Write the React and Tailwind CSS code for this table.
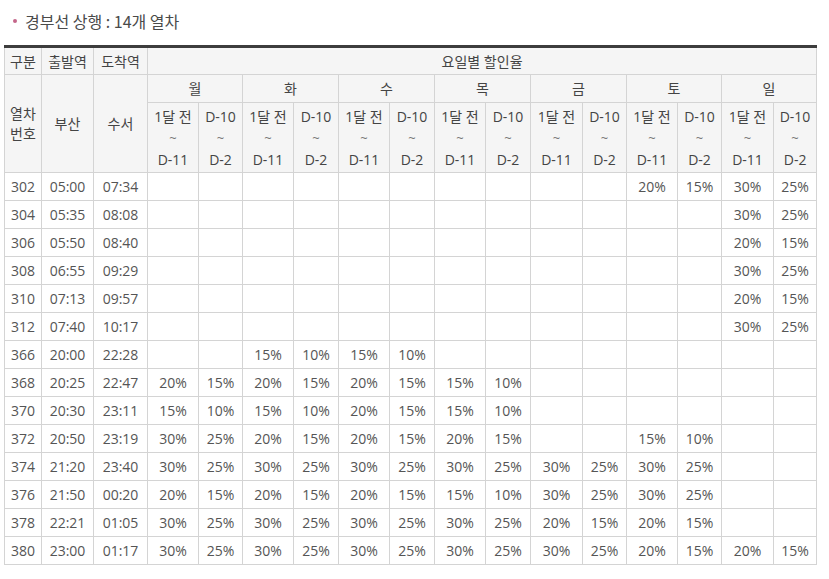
const days = ["월", "화", "수", "목", "금", "토", "일"];

// [열차번호, 부산, 수서, 14 discount cells]
const rows = [
  ["302", "05:00", "07:34", ["", "", "", "", "", "", "", "", "", "", "20%", "15%", "30%", "25%"]],
  ["304", "05:35", "08:08", ["", "", "", "", "", "", "", "", "", "", "", "", "30%", "25%"]],
  ["306", "05:50", "08:40", ["", "", "", "", "", "", "", "", "", "", "", "", "20%", "15%"]],
  ["308", "06:55", "09:29", ["", "", "", "", "", "", "", "", "", "", "", "", "30%", "25%"]],
  ["310", "07:13", "09:57", ["", "", "", "", "", "", "", "", "", "", "", "", "20%", "15%"]],
  ["312", "07:40", "10:17", ["", "", "", "", "", "", "", "", "", "", "", "", "30%", "25%"]],
  ["366", "20:00", "22:28", ["", "", "15%", "10%", "15%", "10%", "", "", "", "", "", "", "", ""]],
  ["368", "20:25", "22:47", ["20%", "15%", "20%", "15%", "20%", "15%", "15%", "10%", "", "", "", "", "", ""]],
  ["370", "20:30", "23:11", ["15%", "10%", "15%", "10%", "20%", "15%", "15%", "10%", "", "", "", "", "", ""]],
  ["372", "20:50", "23:19", ["30%", "25%", "20%", "15%", "20%", "15%", "20%", "15%", "", "", "15%", "10%", "", ""]],
  ["374", "21:20", "23:40", ["30%", "25%", "30%", "25%", "30%", "25%", "30%", "25%", "30%", "25%", "30%", "25%", "", ""]],
  ["376", "21:50", "00:20", ["20%", "15%", "20%", "15%", "20%", "15%", "15%", "10%", "30%", "25%", "30%", "25%", "", ""]],
  ["378", "22:21", "01:05", ["30%", "25%", "30%", "25%", "30%", "25%", "30%", "25%", "20%", "15%", "20%", "15%", "", ""]],
  ["380", "23:00", "01:17", ["30%", "25%", "30%", "25%", "30%", "25%", "30%", "25%", "30%", "25%", "20%", "15%", "20%", "15%"]],
];

const colWidths = [37, 52, 54, 51, 44, 51, 45, 51, 45, 51, 45, 52, 44, 51, 44, 52, 43];

export default function App() {
  const th = "border border-[#d4d4d4] bg-[#f5f5f5] font-normal text-[#444] text-center align-middle p-0";
  const td = "border border-[#d4d4d4] text-center align-middle p-0 h-[28px] text-[#555]";

  return (
    <div className="bg-white w-[829px] h-[579px] font-['Open_Sans','Noto_Sans_CJK_KR',sans-serif] text-[14px]">
      <div className="flex items-center h-[40px] pl-[13px] pt-[1px]">
        <span className="w-[4px] h-[4px] rounded-full bg-[#c4668a] mr-[8px] mt-[1px]"></span>
        <span className="text-[16px] text-[#4a4a4a] font-['Noto_Sans_CJK_KR',sans-serif]">경부선 상행 : 14개 열차</span>
      </div>
      <div className="pl-[4px] pt-[5px]">
        <table className="table-fixed border-collapse w-[811px] border-t-[3px] border-t-[#3d3d3d]">
          <colgroup>
            {colWidths.map((w, i) => (
              <col key={i} style={{ width: w }} />
            ))}
          </colgroup>
          <thead>
            <tr className="h-[28px]">
              <th className={th + " border-t-0"}>구분</th>
              <th className={th + " border-t-0"}>출발역</th>
              <th className={th + " border-t-0"}>도착역</th>
              <th className={th + " border-t-0"} colSpan={14}>요일별 할인율</th>
            </tr>
            <tr className="h-[28px]">
              <th className={th + " leading-[20px]"} rowSpan={2}>
                열차
                <br />
                번호
              </th>
              <th className={th} rowSpan={2}>부산</th>
              <th className={th} rowSpan={2}>수서</th>
              {days.map((d) => (
                <th key={d} className={th} colSpan={2}>{d}</th>
              ))}
            </tr>
            <tr className="h-[70px]">
              {days.map((d) => [
                <th key={d + "a"} className={th + " leading-[21px]"}>
                  1달 전
                  <br />
                  <span className="text-[13px] text-[#777]">~</span>
                  <br />
                  D-11
                </th>,
                <th key={d + "b"} className={th + " leading-[21px]"}>
                  D-10
                  <br />
                  <span className="text-[13px] text-[#777]">~</span>
                  <br />
                  D-2
                </th>,
              ])}
            </tr>
          </thead>
          <tbody>
            {rows.map(([no, dep, arr, cells]) => (
              <tr key={no}>
                <td className={td}>{no}</td>
                <td className={td}>{dep}</td>
                <td className={td}>{arr}</td>
                {cells.map((c, i) => (
                  <td key={i} className={td}>{c}</td>
                ))}
              </tr>
            ))}
          </tbody>
        </table>
      </div>
    </div>
  );
}
